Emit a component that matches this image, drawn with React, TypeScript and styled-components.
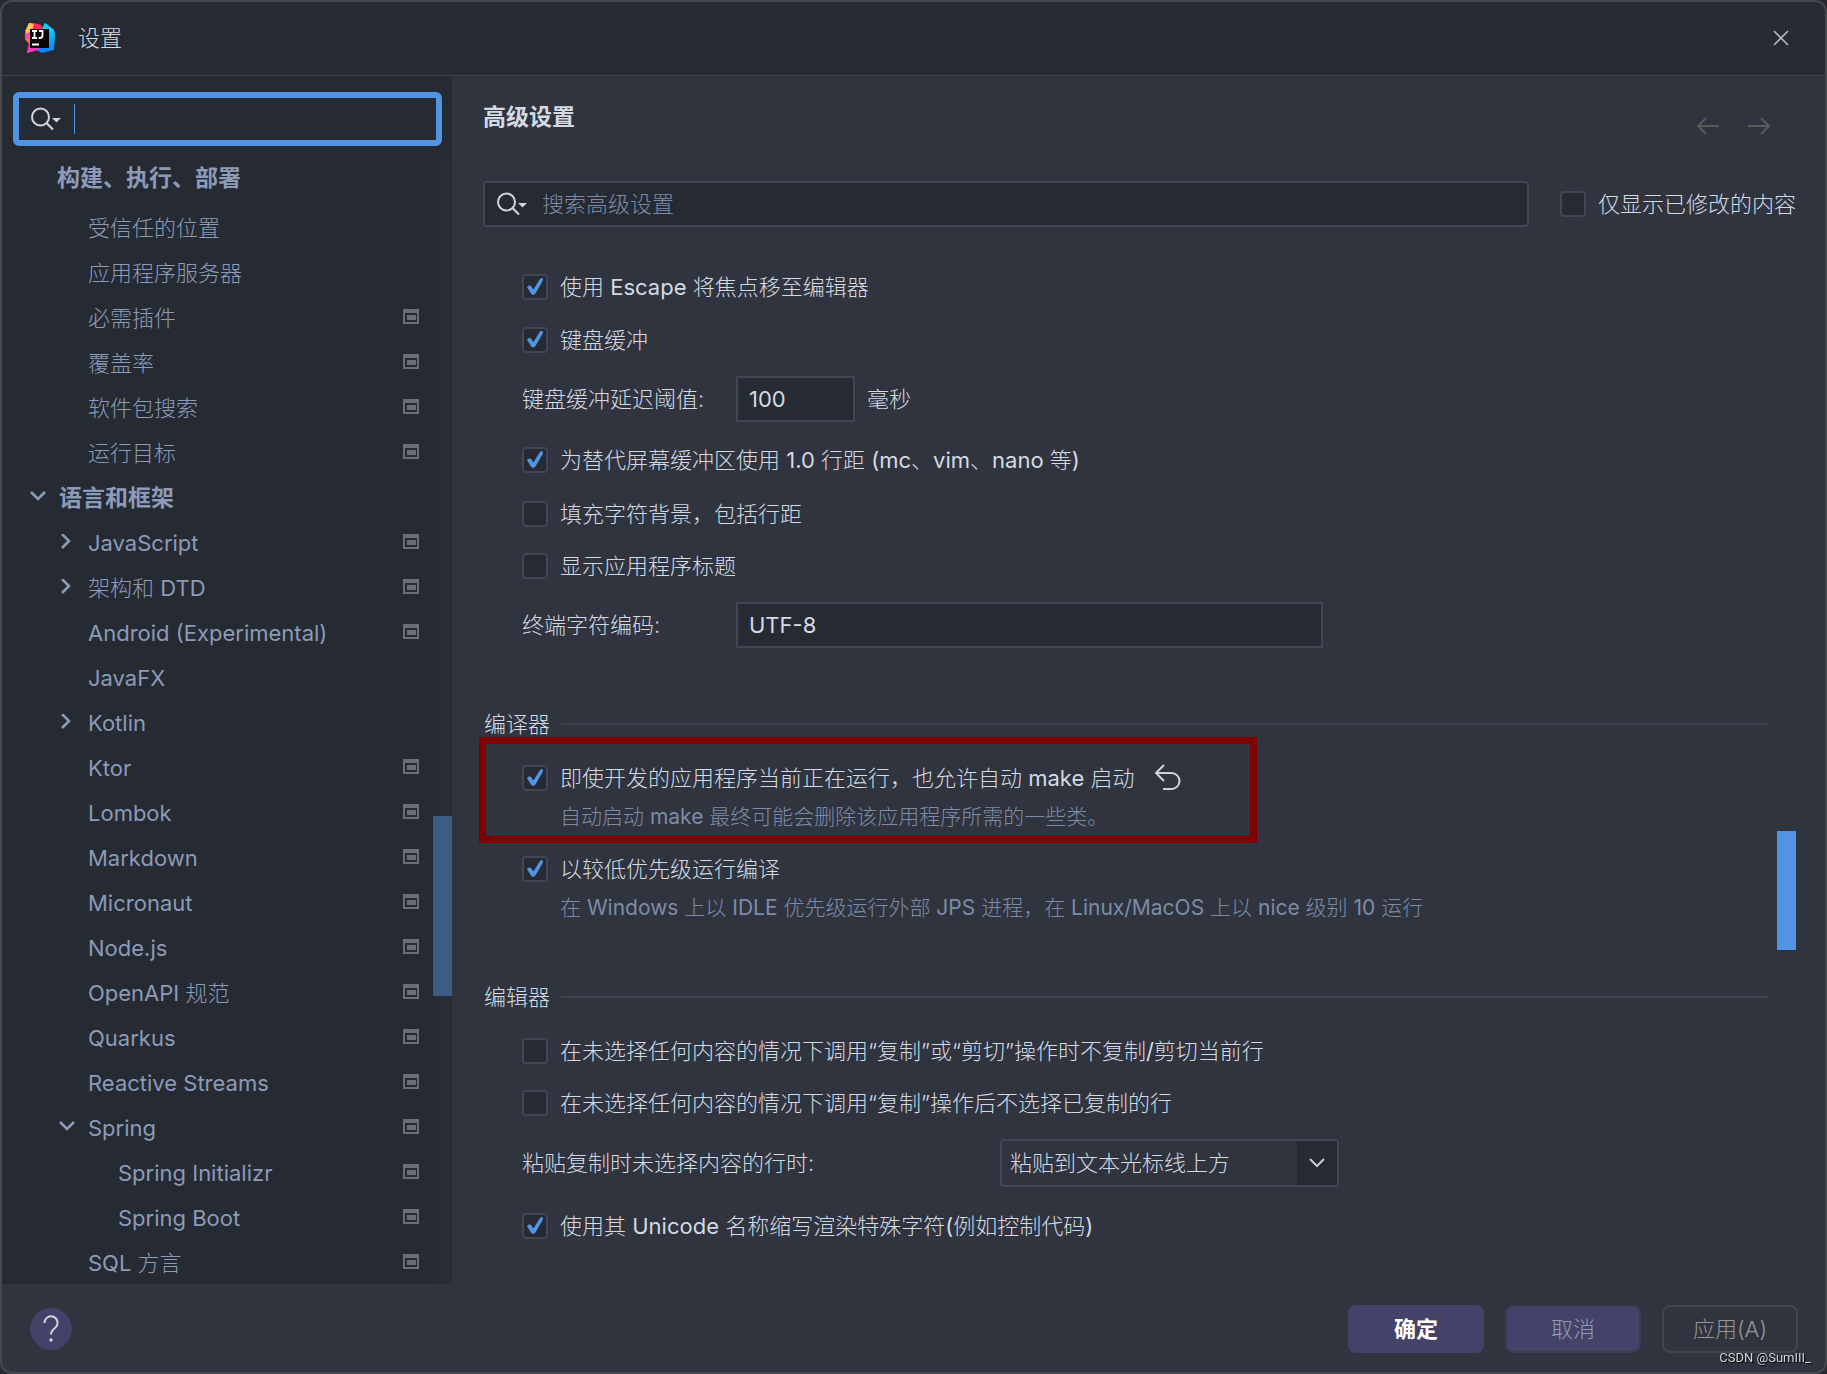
import React from "react";
import styled, { createGlobalStyle, css } from "styled-components";

const c = {
  chrome: "#262a33",
  track: "#282c35",
  panel: "#30343f",
  frame: "#46484d",
  line: "#3f434f",
  border: "#414556",
  accent: "#5294e2",
  tree: "#8b9bb8",
  text: "#d3dae3",
  hint: "#7c8ca8",
  purple: "#444269",
  mark: "#800000",
};

const GlobalStyle = createGlobalStyle`
  *, *::before, *::after { box-sizing: border-box; }
  html, body, #root { height: 100%; }
  body {
    margin: 0;
    background: #26282e;
    color: ${c.text};
    font-family: Inter, "Noto Sans CJK SC", sans-serif;
    font-size: 22px;
    line-height: 28px;
    overflow: hidden;
  }
  button, input, select { font: inherit; color: inherit; margin: 0; }
`;

const Dialog = styled.div`
  height: 100vh;
  display: flex;
  flex-direction: column;
  border: 2px solid ${c.frame};
  border-radius: 12px;
  background: ${c.panel};
  overflow: hidden;
`;

const TitleBar = styled.header`
  flex: none;
  height: 74px;
  padding: 0 28px 2px 22px;
  display: flex;
  align-items: center;
  gap: 22px;
  background: ${c.chrome};
  border-bottom: 1px solid #41454d;
`;

const TitleText = styled.h1`
  flex: 1;
  margin: 0;
  font-size: 22px;
  font-weight: 300;
`;

const IconButton = styled.button`
  display: flex;
  align-items: center;
  justify-content: center;
  padding: 0;
  border: 0;
  background: none;
`;

const Columns = styled.div`
  flex: 1;
  min-height: 0;
  display: flex;
`;

const Sidebar = styled.nav`
  flex: none;
  width: 450px;
  display: flex;
  flex-direction: column;
  background: ${c.chrome};
`;

const SideSearch = styled.label`
  flex: none;
  height: 54px;
  margin: 16px 10px 0 11px;
  padding: 0 12px;
  display: flex;
  align-items: center;
  gap: 13px;
  border: 6px solid ${c.accent};
  border-radius: 6px;
`;

const Caret = styled.span`
  width: 1px;
  height: 30px;
  background: ${c.accent};
`;

const BareInput = styled.input`
  flex: 1;
  min-width: 0;
  padding: 0;
  border: 0;
  outline: 0;
  background: none;
  font-weight: 300;
  &::placeholder { color: ${c.hint}; opacity: 1; }
`;

const TreeArea = styled.div`
  flex: 1;
  min-height: 0;
  margin-top: 12px;
  display: flex;
`;

const Tree = styled.ul`
  flex: 1;
  margin: 0;
  padding: 0;
  list-style: none;
  overflow: hidden;
  color: ${c.tree};
`;

const TreeRow = styled.li<{ $level: number; $sticky?: boolean }>`
  height: ${(p) => (p.$sticky ? 47 : 45)}px;
  padding: 0 14px 0 ${(p) => (p.$sticky ? 25 : [27, 56, 86][p.$level])}px;
  padding-bottom: ${(p) => (p.$sticky ? 7 : 0)}px;
  display: flex;
  align-items: center;
  font-size: ${(p) => (p.$level === 0 ? 23 : 22)}px;
  font-weight: ${(p) => (p.$level === 0 ? 700 : 300)};
`;

const Twisty = styled.span`
  flex: none;
  width: 30px;
  display: flex;
  align-items: center;
`;

const RowLabel = styled.span`
  flex: 1;
  white-space: nowrap;
`;

const Latin = styled.span`
  font-weight: 400;
`;

const Track = styled.div`
  flex: none;
  width: 19px;
  background: ${c.track};
  padding-top: 658px;
`;

const Thumb = styled.div<{ $size: number; $dim?: boolean }>`
  height: ${(p) => p.$size}px;
  background: ${(p) => (p.$dim ? "#3c5c84" : c.accent)};
`;

const Main = styled.main`
  flex: 1;
  min-width: 0;
  display: flex;
  flex-direction: column;
  padding: 24px 29px 0 31px;
`;

const MainHead = styled.div`
  display: flex;
  justify-content: space-between;
  height: 81px;
`;

const MainTitle = styled.h2`
  margin: 3px 0 0;
  font-size: 23px;
  line-height: 28px;
  font-weight: 700;
`;

const Nav = styled.div`
  display: flex;
  align-items: center;
  gap: 27px;
  height: 52px;
  margin-right: 25px;
`;

const FilterBar = styled.div`
  display: flex;
  align-items: center;
  gap: 31px;
`;

const FilterBox = styled.label`
  flex: 1;
  height: 46px;
  padding: 0 12px;
  display: flex;
  align-items: center;
  gap: 15px;
  background: ${c.chrome};
  border: 2px solid ${c.border};
  border-radius: 4px;
`;

const Body = styled.div`
  flex: 1;
  min-height: 0;
  display: flex;
  justify-content: space-between;
  gap: 8px;
`;

const Options = styled.div`
  flex: 1;
  min-width: 0;
  padding-top: 34px;
`;

const MainTrack = styled.div`
  flex: none;
  width: 19px;
  padding-top: 604px;
`;

const Row = styled.div<{ $h: number }>`
  height: ${(p) => p.$h}px;
  padding-left: 39px;
  display: flex;
  align-items: center;
  gap: 12px;
`;

const CheckLabel = styled.label`
  display: flex;
  align-items: center;
  gap: 12px;
  font-weight: 300;
  white-space: nowrap;
`;

const tick = css`
  &::after {
    content: "";
    position: absolute;
    left: 3px;
    top: 2px;
    width: 16px;
    height: 17px;
    background: ${c.accent};
    clip-path: polygon(0 54%, 10% 44%, 24% 46%, 40% 68%, 82% 4%, 94% 0, 100% 6%, 98% 17%, 54% 90%, 42% 100%, 28% 96%);
  }
`;

const Tick = styled.input`
  appearance: none;
  flex: none;
  position: relative;
  width: 26px;
  height: 26px;
  background: ${c.chrome};
  border: 2px solid ${c.border};
  border-radius: 4px;
  &:checked { ${tick} }
`;

const FieldLabel = styled.label<{ $w: number }>`
  width: ${(p) => p.$w}px;
  font-weight: 300;
  white-space: nowrap;
`;

const Field = styled.input<{ $w: number }>`
  width: ${(p) => p.$w}px;
  height: 46px;
  padding: 0 11px;
  background: ${c.chrome};
  border: 2px solid ${c.border};
  outline: 0;
`;

const Unit = styled.span`
  font-weight: 300;
`;

const SelectBox = styled.span`
  position: relative;
  width: 339px;
  height: 48px;
  display: flex;
  border: 2px solid ${c.border};
  border-radius: 4px;
  overflow: hidden;
`;

const Select = styled.select`
  appearance: none;
  flex: 1;
  padding: 0 48px 0 8px;
  border: 0;
  outline: 0;
  background: none;
  font-weight: 300;
`;

const SelectArrow = styled.span`
  position: absolute;
  inset: 0 0 0 auto;
  width: 40px;
  display: flex;
  align-items: center;
  justify-content: center;
  background: ${c.chrome};
  pointer-events: none;
`;

const SectionHead = styled.h3<{ $top: number }>`
  margin: ${(p) => p.$top}px 0 14px;
  padding-left: 1px;
  height: 28px;
  display: flex;
  align-items: center;
  gap: 11px;
  font-size: 22px;
  font-weight: 300;
  &::after {
    content: "";
    flex: 1;
    height: 2px;
    background: ${c.line};
  }
`;

const Hint = styled.p`
  margin: 0 0 13px;
  height: 26px;
  padding-left: 77px;
  display: flex;
  align-items: center;
  color: ${c.hint};
  font-size: 21px;
  font-weight: 300;
  white-space: pre;
`;

const Highlight = styled.div`
  position: relative;
  &::after {
    content: "";
    position: absolute;
    left: -4px;
    top: -15px;
    width: 778px;
    height: 106px;
    border: 7px solid ${c.mark};
    pointer-events: none;
  }
`;

const Footer = styled.footer`
  flex: none;
  height: 88px;
  padding: 2px 27px 0 28px;
  display: flex;
  align-items: center;
  gap: 21px;
`;

const Help = styled.button`
  width: 42px;
  height: 42px;
  padding: 0;
  display: flex;
  align-items: center;
  justify-content: center;
  border: 0;
  border-radius: 50%;
  background: ${c.purple};
  margin-right: auto;
`;

const Action = styled.button<{ $kind: "primary" | "plain" | "off" }>`
  width: 136px;
  height: 48px;
  padding: 0;
  border-radius: 8px;
  border: 2px solid ${(p) => (p.$kind === "primary" ? c.purple : p.$kind === "plain" ? "#3b3d53" : "#41454f")};
  background: ${(p) => (p.$kind === "off" ? "none" : c.purple)};
  color: ${(p) => (p.$kind === "primary" ? "#ffffff" : p.$kind === "plain" ? c.tree : "#969696")};
  font-weight: ${(p) => (p.$kind === "primary" ? 700 : 300)};
`;

const Watermark = styled.span`
  position: fixed;
  right: 16px;
  bottom: 8px;
  color: #d2d3d5;
  font: 13px/16px Roboto, "Liberation Sans", sans-serif;
  text-shadow: 1px 1px 1px #000;
`;

/** Splits mixed strings so the latin runs keep the regular weight. */
const Mixed = ({ text }: { text: string }) => (
  <>
    {text.split(/([ -~]*[!-~][ -~]*)/).map((part, i) =>
      i % 2 ? <Latin key={i}>{part}</Latin> : part
    )}
  </>
);

const Logo = () => (
  <svg width="32" height="32" viewBox="0 0 32 32" aria-hidden="true">
    <defs>
      <linearGradient id="warm" x1="0" y1="0" x2="0" y2="1">
        <stop offset="0" stopColor="#fdb74a" />
        <stop offset=".5" stopColor="#ff7a1c" />
        <stop offset="1" stopColor="#fe2fa0" />
      </linearGradient>
      <linearGradient id="cool" x1="0" y1="0" x2="0" y2="1">
        <stop offset="0" stopColor="#0be0f4" />
        <stop offset="1" stopColor="#0a7cff" />
      </linearGradient>
    </defs>
    <path d="M21 1l9 7 1 5-1 15-12 3-8-4 8-18z" fill="url(#cool)" />
    <path d="M21 1l9 7-6 3-7-3z" fill="#19c8f5" />
    <path d="M5 1l11 2 3 5-1 17-9 4-6 2 2-9-4-5 3-3-3-5z" fill="url(#warm)" />
    <path d="M5 1l6 1-4 10-6 0z" fill="#ffc75a" />
    <path d="M10 1l7 2 3 6H8z" fill="#fe2868" />
    <path d="M1 12l5-2v6l-5 1z" fill="#ff45b8" />
    <path d="M3 31l2-9 11 4-5 3z" fill="#ff35b4" />
    <rect x="6" y="7" width="19" height="19" fill="#0b0508" />
    <path d="M8 9h5M10.500 9v7M8 16h5M15 9h3.500v4.500q0 2.500-3 2.500h-1M8 22.500h7" stroke="#fff" strokeWidth="1.800" fill="none" />
  </svg>
);

const SearchIcon = () => (
  <svg width="30" height="24" viewBox="0 0 30 24" aria-hidden="true">
    <circle cx="9.500" cy="10" r="8.500" fill="none" stroke="#d0d3d9" strokeWidth="2" />
    <path d="M15.500 16l6.500 6.500" stroke="#d0d3d9" strokeWidth="2.200" />
    <path d="M21 11h9l-4.500 4.500z" fill="#d0d3d9" />
  </svg>
);

const Chevron = ({ open }: { open: boolean }) => (
  <svg width="18" height="18" viewBox="0 0 18 18" aria-hidden="true">
    <path
      d={open ? "M2 3l7 7 7-7" : "M4 0l7 7-7 7"}
      fill="none"
      stroke="#8b9bb8"
      strokeWidth="2.600"
    />
  </svg>
);

const ProjectIcon = () => (
  <svg width="16" height="17" viewBox="0 0 16 17" aria-hidden="true">
    <path d="M0 0h16v15H0zM2 4v9h12V4z" fill="#6a6e79" fillRule="evenodd" />
    <rect x="4" y="6" width="9" height="5" fill="#6a6e79" />
  </svg>
);

const Arrow = ({ back }: { back?: boolean }) => (
  <svg width="24" height="18" viewBox="0 0 24 18" aria-hidden="true">
    <path
      d={back ? "M23 9H2M10 1L2 9l8 8" : "M1 9h21M14 1l8 8-8 8"}
      fill="none"
      stroke="#5a5a57"
      strokeWidth="2"
    />
  </svg>
);

type Node = { t: string; level: number; tw?: "open" | "closed"; mark?: boolean };

const nodes: Node[] = [
  { t: "受信任的位置", level: 1 },
  { t: "应用程序服务器", level: 1 },
  { t: "必需插件", level: 1, mark: true },
  { t: "覆盖率", level: 1, mark: true },
  { t: "软件包搜索", level: 1, mark: true },
  { t: "运行目标", level: 1, mark: true },
  { t: "语言和框架", level: 0, tw: "open" },
  { t: "JavaScript", level: 1, tw: "closed", mark: true },
  { t: "架构和 DTD", level: 1, tw: "closed", mark: true },
  { t: "Android (Experimental)", level: 1, mark: true },
  { t: "JavaFX", level: 1 },
  { t: "Kotlin", level: 1, tw: "closed" },
  { t: "Ktor", level: 1, mark: true },
  { t: "Lombok", level: 1, mark: true },
  { t: "Markdown", level: 1, mark: true },
  { t: "Micronaut", level: 1, mark: true },
  { t: "Node.js", level: 1, mark: true },
  { t: "OpenAPI 规范", level: 1, mark: true },
  { t: "Quarkus", level: 1, mark: true },
  { t: "Reactive Streams", level: 1, mark: true },
  { t: "Spring", level: 1, tw: "open", mark: true },
  { t: "Spring Initializr", level: 2, mark: true },
  { t: "Spring Boot", level: 2, mark: true },
  { t: "SQL 方言", level: 1, mark: true },
];

const Check = ({ text, on }: { text: string; on?: boolean }) => (
  <CheckLabel>
    <Tick type="checkbox" defaultChecked={on} />
    <span>
      <Mixed text={text} />
    </span>
  </CheckLabel>
);

export default function App() {
  return (
    <>
      <GlobalStyle />
      <Dialog role="dialog" aria-label="设置">
        <TitleBar>
          <Logo />
          <TitleText>设置</TitleText>
          <IconButton aria-label="关闭">
            <svg width="32" height="32" viewBox="0 0 32 32" aria-hidden="true">
              <path d="M9 9l14 14M23 9L9 23" stroke="#b4b5b7" strokeWidth="1.600" />
            </svg>
          </IconButton>
        </TitleBar>

        <Columns>
          <Sidebar>
            <SideSearch>
              <SearchIcon />
              <Caret />
              <BareInput type="text" aria-label="搜索" />
            </SideSearch>
            <TreeArea>
              <Tree>
                <TreeRow $level={0} $sticky>
                  <Twisty />
                  <RowLabel>构建、执行、部署</RowLabel>
                </TreeRow>
                {nodes.map((n) => (
                  <TreeRow key={n.t} $level={n.level}>
                    <Twisty>{n.tw && <Chevron open={n.tw === "open"} />}</Twisty>
                    <RowLabel>
                      <Mixed text={n.t} />
                    </RowLabel>
                    {n.mark && <ProjectIcon />}
                  </TreeRow>
                ))}
              </Tree>
              <Track>
                <Thumb $size={180} $dim />
              </Track>
            </TreeArea>
          </Sidebar>

          <Main>
            <MainHead>
              <MainTitle>高级设置</MainTitle>
              <Nav>
                <IconButton aria-label="后退">
                  <Arrow back />
                </IconButton>
                <IconButton aria-label="前进">
                  <Arrow />
                </IconButton>
              </Nav>
            </MainHead>
            <FilterBar>
              <FilterBox>
                <SearchIcon />
                <BareInput type="text" placeholder="搜索高级设置" aria-label="搜索高级设置" />
              </FilterBox>
              <Check text="仅显示已修改的内容" />
            </FilterBar>

            <Body>
              <Options>
                <Row $h={52}>
                  <Check text="使用 Escape 将焦点移至编辑器" on />
                </Row>
                <Row $h={53}>
                  <Check text="键盘缓冲" on />
                </Row>
                <Row $h={66}>
                  <FieldLabel $w={202} htmlFor="delay">键盘缓冲延迟阈值:</FieldLabel>
                  <Field $w={119} id="delay" defaultValue="100" />
                  <Unit>毫秒</Unit>
                </Row>
                <Row $h={56}>
                  <Check text="为替代屏幕缓冲区使用 1.0 行距 (mc、vim、nano 等)" on />
                </Row>
                <Row $h={52}>
                  <Check text="填充字符背景，包括行距" />
                </Row>
                <Row $h={52}>
                  <Check text="显示应用程序标题" />
                </Row>
                <Row $h={66}>
                  <FieldLabel $w={202} htmlFor="charset">终端字符编码:</FieldLabel>
                  <Field $w={587} id="charset" defaultValue="UTF-8" />
                </Row>

                <SectionHead $top={52}>编译器</SectionHead>
                <Highlight>
                  <Row $h={52}>
                    <Check text="即使开发的应用程序当前正在运行，也允许自动 make 启动" on />
                    <IconButton aria-label="还原">
                      <svg width="40" height="28" viewBox="0 0 40 28" aria-hidden="true">
                        <path
                          d="M18 1l-8 8 8 8M10 9h15.500a8 8 0 0 1 0 16H17"
                          fill="none"
                          stroke="#d0d3d9"
                          strokeWidth="2"
                        />
                      </svg>
                    </IconButton>
                  </Row>
                  <Hint>
                    <Mixed text="自动启动 make 最终可能会删除该应用程序所需的一些类。" />
                  </Hint>
                </Highlight>
                <Row $h={52}>
                  <Check text="以较低优先级运行编译" on />
                </Row>
                <Hint>
                  <Mixed text="在 Windows 上以 IDLE 优先级运行外部 JPS 进程，在 Linux/MacOS 上以 nice 级别 10 运行" />
                </Hint>

                {/* margins collapse with the hint above */}
                <SectionHead $top={62}>编辑器</SectionHead>
                <Row $h={52}>
                  <Check text="在未选择任何内容的情况下调用“复制”或“剪切”操作时不复制/剪切当前行" />
                </Row>
                <Row $h={52}>
                  <Check text="在未选择任何内容的情况下调用“复制”操作后不选择已复制的行" />
                </Row>
                <Row $h={68}>
                  <FieldLabel $w={466} htmlFor="paste">粘贴复制时未选择内容的行时:</FieldLabel>
                  <SelectBox>
                    <Select id="paste">
                      <option>粘贴到文本光标线上方</option>
                    </Select>
                    <SelectArrow>
                      <svg width="16" height="10" viewBox="0 0 16 10" aria-hidden="true">
                        <path d="M1 1l7 7 7-7" fill="none" stroke="#c6c9cf" strokeWidth="2" />
                      </svg>
                    </SelectArrow>
                  </SelectBox>
                </Row>
                <Row $h={58}>
                  <Check text="使用其 Unicode 名称缩写渲染特殊字符(例如控制代码)" on />
                </Row>
              </Options>
              <MainTrack>
                <Thumb $size={119} />
              </MainTrack>
            </Body>
          </Main>
        </Columns>

        <Footer>
          <Help aria-label="帮助">
            <svg width="20" height="28" viewBox="0 0 20 28" aria-hidden="true">
              <path
                d="M3.500 8a6.500 6.500 0 1 1 11 4.500Q10 16 10 19.500"
                fill="none"
                stroke="#d0d3d9"
                strokeWidth="2"
              />
              <circle cx="10" cy="25" r="1.700" fill="#d0d3d9" />
            </svg>
          </Help>
          <Action $kind="primary">确定</Action>
          <Action $kind="plain">取消</Action>
          <Action $kind="off">应用(A)</Action>
        </Footer>
      </Dialog>
      <Watermark>CSDN @SumIII_</Watermark>
    </>
  );
}
